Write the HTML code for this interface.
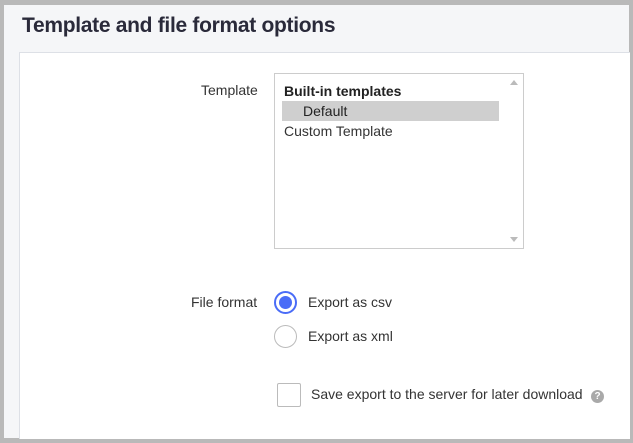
<!DOCTYPE html>
<html><head><style>
body{margin:0;width:633px;height:443px;background:#b9b9b9;font-family:"Liberation Sans",sans-serif;overflow:hidden;position:relative}
.outer{position:absolute;left:4px;top:5px;width:625px;height:433px;background:#f5f6f8}
h1{position:absolute;left:18px;top:9px;margin:0;font-size:21px;font-weight:bold;color:#2a2a3a;letter-spacing:-0.3px}
.inner{position:absolute;left:15px;top:47px;width:610px;height:386px;background:#fff;border-top:1px solid #dde0e6;border-left:1px solid #dde0e6}
.t{position:absolute;font-size:14px;color:#333;white-space:nowrap}
.sel{position:absolute;left:254px;top:20px;width:248px;height:174px;border:1px solid #ccc;background:#fff}
.radio{position:absolute;width:21px;height:21px;border:1px solid #bbb;border-radius:50%;background:#fff}
</style></head><body>
<div class="outer">
<h1>Template and file format options</h1>
<div class="inner">
<div class="t" style="left:181px;top:29px">Template</div>
<div class="sel">
 <div class="t" style="left:9px;top:9px;font-weight:bold;color:#222">Built-in templates</div>
 <div style="position:absolute;left:7px;top:27px;width:217px;height:20px;background:#cfcfcf"></div>
 <div class="t" style="left:28px;top:29px;color:#222">Default</div>
 <div class="t" style="left:9px;top:49px">Custom Template</div>
 <div style="position:absolute;right:5px;top:6px;width:0;height:0;border-left:4px solid transparent;border-right:4px solid transparent;border-bottom:5px solid #bbb"></div>
 <div style="position:absolute;right:5px;bottom:6px;width:0;height:0;border-left:4px solid transparent;border-right:4px solid transparent;border-top:5px solid #bbb"></div>
</div>
<div class="t" style="left:171px;top:241px">File format</div>
<div class="radio" style="left:254px;top:238px;border:2px solid #4a6cf7;width:19px;height:19px"><div style="position:absolute;left:3px;top:3px;width:13px;height:13px;border-radius:50%;background:#4a6cf7"></div></div>
<div class="t" style="left:288px;top:241px">Export as csv</div>
<div class="radio" style="left:254px;top:272px"></div>
<div class="t" style="left:288px;top:275px">Export as xml</div>
<div style="position:absolute;left:257px;top:330px;width:22px;height:22px;border:1px solid #bbb;border-radius:2px"></div>
<div class="t" style="left:291px;top:333px">Save export to the server for later download</div>
<div style="position:absolute;left:571px;top:337px;width:13px;height:13px;border-radius:50%;background:#a9a9a9;color:#fff;font-size:10px;font-weight:bold;text-align:center;line-height:13px">?</div>
</div>
</div>
</body></html>
